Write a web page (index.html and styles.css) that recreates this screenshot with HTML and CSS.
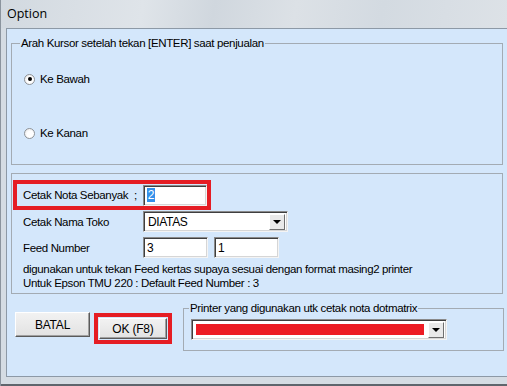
FILE: index.html
```html
<!DOCTYPE html>
<html lang="id">
<head>
  <meta charset="UTF-8">
  <title>Option</title>
  <link rel="stylesheet" href="styles.css">
</head>
<body>
  <div class="window">
    <div class="titlebar">Option</div>
    <div class="frame">
      <div class="client">
        <fieldset class="group group-cursor">
          <legend>Arah Kursor setelah tekan [ENTER] saat penjualan</legend>
          <div class="group-body">
            <label class="radio"><span class="dot checked"></span>Ke Bawah</label>
            <label class="radio"><span class="dot"></span>Ke Kanan</label>
          </div>
        </fieldset>

        <fieldset class="group group-nota">
          <div class="form-row mark">
            <span class="caption">Cetak Nota Sebanyak &nbsp;;</span>
            <span class="textbox small"><span class="sel">2</span></span>
          </div>
          <div class="form-row">
            <span class="caption">Cetak Nama Toko</span>
            <span class="combo toko"><span class="combo-text">DIATAS</span><span class="arrow"></span></span>
          </div>
          <div class="form-row feed">
            <span class="caption">Feed Number</span>
            <span class="textbox small">3</span>
            <span class="textbox small">1</span>
          </div>
          <p class="note">digunakan untuk tekan Feed kertas supaya sesuai dengan format masing2 printer</p>
          <p class="note">Untuk Epson TMU 220 : Default Feed Number : 3</p>
        </fieldset>

        <div class="bottom">
          <button class="btn batal">BATAL</button>
          <div class="mark-btn"><button class="btn ok">OK (F8)</button></div>
          <fieldset class="group group-printer">
            <legend>Printer yang digunakan utk cetak nota dotmatrix</legend>
            <div class="group-body">
              <span class="combo printer"><span class="printer-fill"></span><span class="arrow"></span></span>
            </div>
          </fieldset>
        </div>
      </div>
    </div>
  </div>
</body>
</html>
```

FILE: styles.css
```css
* {
  box-sizing: border-box;
}

body {
  margin: 0;
  overflow: hidden;
  font-family: "Liberation Sans", Arial, sans-serif;
  font-size: 11.5px;
  letter-spacing: -0.35px;
  color: #000;
}

.window {
  width: 507px;
  height: 386px;
  display: flex;
  flex-direction: column;
  background: #d5dce3;
  border-left: 1px solid #8b949e;
}

.titlebar {
  flex: none;
  height: 28px;
  line-height: 28px;
  padding-left: 6px;
  font-family: "Open Sans", "Noto Sans", sans-serif;
  font-size: 12.5px;
  letter-spacing: 0;
  background: linear-gradient(100deg, #d2d9e0 0%, #dfe4e9 28%, #d0d7de 42%, #dce1e6 58%, #d3dae1 75%, #dde2e7 100%);
}

.frame {
  flex: 1;
  display: flex;
  padding: 0 0 7px 5px;
  border-bottom: 2px solid #5f656c;
}

.client {
  flex: 1;
  background: #d4e7fb;
  border-top: 1px solid #8d99a6;
  border-left: 1px solid #8d99a6;
  border-bottom: 1px solid #8d99a6;
  padding-left: 4px;
}

.group {
  margin: 0;
  padding: 0;
  min-width: 0;
  border: 1px solid #a3abb3;
}

.group legend {
  padding: 0 1px;
  line-height: 14px;
  height: 14px;
}

.group-cursor {
  width: 492px;
  margin-top: 7px;
}

.group-cursor legend {
  margin-left: 8px;
}

.group-cursor .group-body {
  padding: 21px 0 23px 12px;
}

.radio {
  display: flex;
  align-items: center;
  height: 16px;
}

.radio + .radio {
  margin-top: 38px;
}

.dot {
  width: 11px;
  height: 11px;
  margin-right: 5px;
  border-radius: 50%;
  border: 1px solid #8f9397;
  background: radial-gradient(circle at 60% 60%, #fff 40%, #e2e2e2 100%);
  display: flex;
  align-items: center;
  justify-content: center;
}

.dot.checked::after {
  content: '';
  width: 4px;
  height: 4px;
  border-radius: 50%;
  background: #000;
}

.group-nota {
  width: 492px;
  margin-top: 8px;
  padding: 6px 0 3px 11px;
}

.form-row {
  display: flex;
  align-items: center;
  gap: 6px;
  height: 21px;
  margin-top: 1px;
}

.form-row.feed {
  margin-top: 5px;
}

.form-row.mark {
  width: 198px;
  height: 30px;
  margin: 0 0 0 -10px;
  padding-left: 6px;
  border: 4px solid #e51d24;
}

.caption {
  width: 114px;
  line-height: 14px;
  white-space: nowrap;
}

.textbox, .combo {
  display: flex;
  align-items: center;
  height: 21px;
  background: #fff;
  border-top: 1px solid #8a8a8a;
  border-left: 1px solid #8a8a8a;
  border-right: 1px solid #f4f4f4;
  border-bottom: 1px solid #f4f4f4;
  box-shadow: inset 1px 1px 0 #3f3f3f, inset -1px -1px 0 #d6d6d6;
  padding-left: 3px;
  font-size: 12px;
}

.textbox.small {
  width: 65px;
}

.sel {
  background: #3390ea;
  color: #fff;
  line-height: 14px;
  padding: 0 1px;
}

.combo {
  justify-content: space-between;
  padding-right: 2px;
}

.combo.toko {
  width: 145px;
}

.combo-text {
  padding-left: 1px;
}

.arrow {
  width: 16px;
  height: 16px;
  background: #e9e9e9;
  border-top: 1px solid #fff;
  border-left: 1px solid #fff;
  border-right: 1px solid #6f6f6f;
  border-bottom: 1px solid #6f6f6f;
  display: flex;
  align-items: center;
  justify-content: center;
}

.arrow::after {
  content: '';
  border-left: 4px solid transparent;
  border-right: 4px solid transparent;
  border-top: 4px solid #000;
}

.note {
  margin: 0;
  line-height: 14px;
}

.form-row.feed + .note {
  margin-top: 4px;
}

.bottom {
  display: flex;
  align-items: flex-start;
  padding-left: 4px;
}

.btn {
  font-family: inherit;
  font-size: 12px;
  letter-spacing: -0.2px;
  color: #000;
  background: linear-gradient(#f2f2f2, #e2e2e2);
  border-top: 1px solid #fff;
  border-left: 1px solid #fff;
  border-right: 1px solid #5a5a5a;
  border-bottom: 1px solid #5a5a5a;
  box-shadow: inset -1px -1px 0 #a0a0a0;
  padding: 0;
}

.batal {
  width: 75px;
  height: 25px;
  margin-top: 18px;
}

.mark-btn {
  margin: 19px 0 0 4px;
  width: 78px;
  height: 31px;
  border: 4px solid #e51d24;
  padding: 1px;
}

.ok {
  width: 68px;
  height: 21px;
}

.group-printer {
  width: 321px;
  margin: 7px 0 0 11px;
}

.group-printer legend {
  margin-left: 5px;
}

.group-printer .group-body {
  padding: 4px 0 10px 7px;
}

.combo.printer {
  width: 256px;
  padding-left: 4px;
}

.printer-fill {
  width: 228px;
  height: 11px;
  background: #ed1c24;
}
```
